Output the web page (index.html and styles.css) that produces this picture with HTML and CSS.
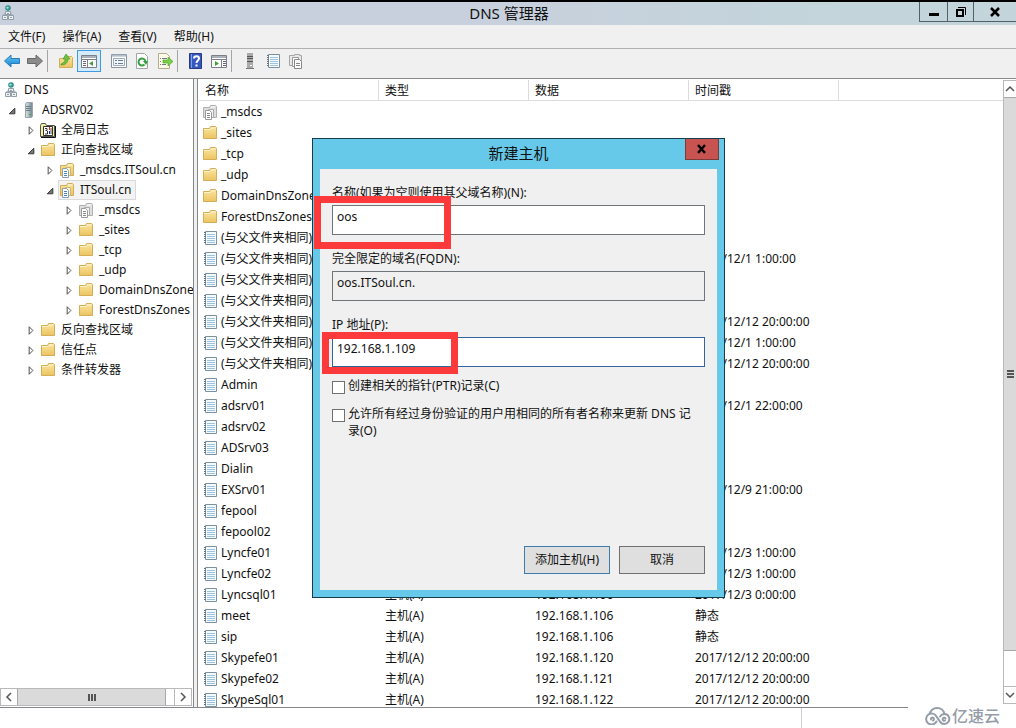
FILE: index.html
```html
<!DOCTYPE html>
<html lang="zh-CN">
<head>
<meta charset="utf-8">
<title>DNS 管理器</title>
<link rel="stylesheet" href="styles.css">
</head>
<body>
<svg class="sprite" aria-hidden="true">
  <defs>
    <linearGradient id="gold" x1="0" y1="0" x2="0" y2="1"><stop offset="0" stop-color="#fbe6a2"/><stop offset="1" stop-color="#ecc35f"/></linearGradient>
    <linearGradient id="steel" x1="0" y1="0" x2="1" y2="0"><stop offset="0" stop-color="#dfe7ea"/><stop offset="1" stop-color="#70838c"/></linearGradient>
    <linearGradient id="blue" x1="0" y1="0" x2="0" y2="1"><stop offset="0" stop-color="#6cc9f8"/><stop offset="1" stop-color="#1080cf"/></linearGradient>
  </defs>
  <symbol id="i-dns" viewBox="0 0 16 16">
    <circle cx="8" cy="3" r="2.800" fill="#2f928d"/><path d="M6 2.500l2-1 1 1.500-2 1z" fill="#a5e0d8"/><path d="M8 6v2M4 11V9h8v2" fill="none" stroke="#9aa5ae"/>
    <path d="M5.500 6.500h5v3h-5zM2.500 10.500h5v4h-5zM8.500 10.500h5v4h-5z" fill="#eef1f4" stroke="#919ca6"/><path d="M4 12.500h2M10 12.500h2M7 8.500h2" stroke="#919ca6"/>
  </symbol>
  <symbol id="i-server" viewBox="0 0 16 16">
    <path d="M4.500 1.500l1-1h6v14l-1 1h-6z" fill="url(#steel)" stroke="#9aa6ac"/><path d="M5 4.500h5M5 6.500h5M5 8.500h5" stroke="#6c7f88"/><path d="M8 12h2v1H8z" fill="#2fae4a"/>
  </symbol>
  <symbol id="i-server-gray" viewBox="0 0 16 16">
    <path d="M5 0h6v15H5z" fill="#aaa"/><path d="M5 3.500h6M5 5.500h6M5 8.500h6" stroke="#555"/><path d="M8 12h2v1H8z" fill="#fff"/><path d="M4 15.500h8" stroke="#777"/>
  </symbol>
  <symbol id="i-folder" viewBox="0 0 16 16">
    <path d="M1.500 3.500h6l1-2h5l1 1v11h-13z" fill="url(#gold)" stroke="#d3ad57"/><path d="M9 2.500h4v1H9z" fill="#fff7d8"/><path d="M2 4.500h6l1-1" stroke="#fff3c4" fill="none"/>
  </symbol>
  <symbol id="i-log" viewBox="0 0 16 16">
    <path d="M.5 3.500l1-2h4l1 2h8v11H.5z" fill="#f3ee9c" stroke="#555"/><path d="M15.500 4v11.500H1" fill="none" stroke="#111"/><path d="M3.500 4.500h9v9h-9z" fill="#fff" stroke="#333"/><path d="M5 6.500h2v2H5.500M7.500 9v3H5" fill="none" stroke="#333"/><path d="M9.500 5v3" stroke="#d22"/><path d="M9.500 9v3" stroke="#22c"/><path d="M11 6v6" stroke="#555"/>
  </symbol>
  <symbol id="i-zone" viewBox="0 0 16 16">
    <path d="M1.500 3.500h6l1-2h5l1 1v11h-13z" fill="url(#gold)" stroke="#d3ad57"/><path d="M9 2.500h4v1H9z" fill="#fff7d8"/>
    <path d="M6.500 5.500h5v8h-5z" fill="#fdf3d0" stroke="#c9b67a"/><path d="M3.500 6.500h4l2 2v7h-6z" fill="#fff" stroke="#8ba0b2"/><path d="M5 9.500h3M5 11.500h3M5 13.500h3" stroke="#4a84b8"/>
  </symbol>
  <symbol id="i-zone-gray" viewBox="0 0 16 16">
    <path d="M1.500 3.500h6l1-2h5l1 1v11h-13z" fill="#dedede" stroke="#b0b0b0"/><path d="M9 2.500h4v1H9z" fill="#fff"/>
    <path d="M6.500 5.500h5v8h-5z" fill="#f2f2f2" stroke="#aaa"/><path d="M3.500 6.500h4l2 2v7h-6z" fill="#fff" stroke="#999"/><path d="M5 9.500h3M5 11.500h3M5 13.500h3" stroke="#888"/>
  </symbol>
  <symbol id="i-record" viewBox="0 0 16 16">
    <path d="M3.500 1.500h11v13h-11z" fill="#f4fafd" stroke="#7d909e"/><path d="M5 4.500h8M5 6.500h8M5 8.500h8M5 10.500h8M5 12.500h8" stroke="#9cc4df"/><path d="M2 2.500h2M2 4.500h2M2 6.500h2M2 8.500h2M2 10.500h2M2 12.500h2" stroke="#66747f"/>
  </symbol>
  <symbol id="i-open" viewBox="0 0 16 16"><path d="M10.500 5.500v6h-6z" fill="#777" stroke="#333"/></symbol>
  <symbol id="i-closed" viewBox="0 0 16 16"><path d="M5.500 4v8l4-4z" fill="#fff" stroke="#444"/></symbol>
  <symbol id="i-left" viewBox="0 0 10 10"><path d="M7 1L3 5l4 4" fill="none" stroke="#555" stroke-width="1.500"/></symbol>
</svg>

<div class="window">
  <header class="titlebar">
    <svg class="icon"><use href="#i-dns"/></svg>
    <h1>DNS 管理器</h1>
    <div class="controls">
      <button class="ctl" aria-label="最小化"><svg viewBox="0 0 14 14"><path d="M2 8h10v3H2z"/></svg></button>
      <button class="ctl ctl-restore" aria-label="还原"><svg viewBox="0 0 14 14"><path d="M3 5h6v6H3z" fill="none" stroke="#000" stroke-width="2"/><path d="M4 2.500h7.500V10" fill="none" stroke="#000"/></svg></button>
      <button class="ctl ctl-close" aria-label="关闭"><svg viewBox="0 0 14 14"><path d="M3 3l8 8M11 3l-8 8" stroke="#000" stroke-width="2.500"/></svg></button>
    </div>
  </header>

  <nav class="menubar">
    <button>文件(F)</button><button>操作(A)</button><button>查看(V)</button><button>帮助(H)</button>
  </nav>

  <div class="toolbar">
    <button aria-label="后退"><svg viewBox="0 0 16 16"><path d="M.5 8L7 2v3.500h8.500v5H7V14z" fill="url(#blue)" stroke="#2b7cb8"/></svg></button>
    <button aria-label="前进"><svg viewBox="0 0 16 16"><path d="M15.500 8L9 2v3.500H.5v5H9V14z" fill="#8b8b8b" stroke="#686868"/></svg></button>
    <span class="sep"></span>
    <button aria-label="向上"><svg viewBox="0 0 16 16"><path d="M1.500 5.500h6l2-2h4l1 1v10h-13z" fill="url(#gold)" stroke="#d3ad57"/><path d="M3 11c3-1 4-3 4-5H5l3-5 4 5h-2c0 4-3 6-7 6z" fill="#6fc044" stroke="#3f9222" stroke-width=".6"/></svg></button>
    <button class="on" aria-label="控制台树"><svg viewBox="0 0 16 16"><path d="M.5 2.500h15v12H.5z" fill="#fff" stroke="#7a7f8a"/><path d="M1 3h14v2H1z" fill="#aab0bc"/><path d="M1 6.500h14M6.500 7v7" stroke="#7a7f8a"/><path d="M2 8.500h3M2 10.500h3M2 12.500h3" stroke="#667"/><path d="M12 8v5l-4-2.500z" fill="#42a23a"/></svg></button>
    <button class="gap" aria-label="属性"><svg viewBox="0 0 16 16"><path d="M.5 1.500h15v13H.5z" fill="#fff" stroke="#8795a3"/><path d="M1 2h14v1H1zM2.500 5.500h11v7h-11z" fill="#f4f7fa" stroke="#9eabb8"/><path d="M4 7.500h2M7 7.500h5M4 10.500h2M7 10.500h5" stroke="#667c92"/></svg></button>
    <button aria-label="刷新"><svg viewBox="0 0 16 16"><path d="M2.500.5h8l3 3v12h-11z" fill="#fff" stroke="#a1a6a8"/><path d="M10.500 11.500a3.500 3.500 0 1 1 1-3" fill="none" stroke="#38a044" stroke-width="2"/><path d="M9 8h5l-2 4z" fill="#38a044"/></svg></button>
    <button aria-label="导出列表"><svg viewBox="0 0 16 16"><path d="M1.500.5h8l3 3v12h-11z" fill="#fffbea" stroke="#b4aa8c"/><path d="M3 5.500h1M5 5.500h5M3 8.500h1M3 11.500h1M5 11.500h4" stroke="#777"/><path d="M6 7h5V4l5 4.500-5 4.500v-3H6z" fill="#7bcf45" stroke="#45a126" stroke-width=".6"/></svg></button>
    <span class="sep"></span>
    <button aria-label="帮助"><svg viewBox="0 0 16 16"><path d="M1.500.5h12v15h-12z" fill="#3558bd" stroke="#263b80"/><path d="M3.500 1v14" stroke="#7fa0e8"/><path d="M6 5.500c0-3 5-3 5 0 0 2-2.500 2-2.500 4.500M8.500 11.500v2" fill="none" stroke="#fff" stroke-width="2"/></svg></button>
    <button aria-label="操作窗格"><svg viewBox="0 0 16 16"><path d="M.5 2.500h15v12H.5z" fill="#fff" stroke="#7a7f8a"/><path d="M1 3h14v2H1z" fill="#aab0bc"/><path d="M1 6.500h14M10.500 7v7" stroke="#7a7f8a"/><path d="M12 8.500h3M12 10.500h3M12 12.500h3" stroke="#667"/><path d="M4 8v5l4-2.500z" fill="#42a23a"/></svg></button>
    <span class="sep"></span>
    <button aria-label="服务器"><svg><use href="#i-server-gray"/></svg></button>
    <button aria-label="记录"><svg><use href="#i-record"/></svg></button>
    <button aria-label="区域"><svg viewBox="0 0 16 16"><path d="M1.500 2.500h5v-1h5v1h2v10h-12z" fill="#e8e8e8" stroke="#a5a5a5"/><path d="M4.500 4.500h6v9h-6z" fill="#fff" stroke="#999"/><path d="M6.500 6.500h5l2 2v7h-7z" fill="#fff" stroke="#888"/><path d="M8 10.500h4M8 12.500h4" stroke="#888"/></svg></button>
  </div>

  <main class="panes">
    <section class="tree-pane">
      <ul class="tree">
        <li><div class="node"><span class="label"><svg class="icon"><use href="#i-dns"/></svg>DNS</span></div>
          <ul class="first">
            <li><div class="node"><svg class="tog"><use href="#i-open"/></svg><span class="label"><svg class="icon"><use href="#i-server"/></svg>ADSRV02</span></div>
              <ul>
                <li><div class="node"><svg class="tog"><use href="#i-closed"/></svg><span class="label"><svg class="icon"><use href="#i-log"/></svg>全局日志</span></div></li>
                <li><div class="node"><svg class="tog"><use href="#i-open"/></svg><span class="label"><svg class="icon"><use href="#i-folder"/></svg>正向查找区域</span></div>
                  <ul>
                    <li><div class="node"><svg class="tog"><use href="#i-closed"/></svg><span class="label"><svg class="icon"><use href="#i-zone"/></svg>_msdcs.ITSoul.cn</span></div></li>
                    <li><div class="node"><svg class="tog"><use href="#i-open"/></svg><span class="label selected"><svg class="icon"><use href="#i-zone"/></svg>ITSoul.cn</span></div>
                      <ul>
                        <li><div class="node"><svg class="tog"><use href="#i-closed"/></svg><span class="label"><svg class="icon"><use href="#i-zone-gray"/></svg>_msdcs</span></div></li>
                        <li><div class="node"><svg class="tog"><use href="#i-closed"/></svg><span class="label"><svg class="icon"><use href="#i-folder"/></svg>_sites</span></div></li>
                        <li><div class="node"><svg class="tog"><use href="#i-closed"/></svg><span class="label"><svg class="icon"><use href="#i-folder"/></svg>_tcp</span></div></li>
                        <li><div class="node"><svg class="tog"><use href="#i-closed"/></svg><span class="label"><svg class="icon"><use href="#i-folder"/></svg>_udp</span></div></li>
                        <li><div class="node"><svg class="tog"><use href="#i-closed"/></svg><span class="label"><svg class="icon"><use href="#i-folder"/></svg>DomainDnsZones</span></div></li>
                        <li><div class="node"><svg class="tog"><use href="#i-closed"/></svg><span class="label"><svg class="icon"><use href="#i-folder"/></svg>ForestDnsZones</span></div></li>
                      </ul>
                    </li>
                  </ul>
                </li>
                <li><div class="node"><svg class="tog"><use href="#i-closed"/></svg><span class="label"><svg class="icon"><use href="#i-folder"/></svg>反向查找区域</span></div></li>
                <li><div class="node"><svg class="tog"><use href="#i-closed"/></svg><span class="label"><svg class="icon"><use href="#i-folder"/></svg>信任点</span></div></li>
                <li><div class="node"><svg class="tog"><use href="#i-closed"/></svg><span class="label"><svg class="icon"><use href="#i-folder"/></svg>条件转发器</span></div></li>
              </ul>
            </li>
          </ul>
        </li>
      </ul>
      <div class="hscroll">
        <button aria-label="向左滚动"><svg><use href="#i-left"/></svg></button>
        <div class="track"><div class="thumb"><i class="grip"></i></div></div>
        <button aria-label="向右滚动"><svg class="turn-right"><use href="#i-left"/></svg></button>
      </div>
    </section>

    <section class="list-pane">
      <div class="list">
        <table>
          <colgroup><col class="c-name"><col class="c-type"><col class="c-data"><col class="c-time"><col></colgroup>
          <thead><tr><th>名称</th><th>类型</th><th>数据</th><th>时间戳</th><th></th></tr></thead>
          <tbody>
            <tr><td><svg class="icon"><use href="#i-zone-gray"/></svg>_msdcs</td><td></td><td></td><td></td><td></td></tr>
            <tr><td><svg class="icon"><use href="#i-folder"/></svg>_sites</td><td></td><td></td><td></td><td></td></tr>
            <tr><td><svg class="icon"><use href="#i-folder"/></svg>_tcp</td><td></td><td></td><td></td><td></td></tr>
            <tr><td><svg class="icon"><use href="#i-folder"/></svg>_udp</td><td></td><td></td><td></td><td></td></tr>
            <tr><td><svg class="icon"><use href="#i-folder"/></svg>DomainDnsZones</td><td></td><td></td><td></td><td></td></tr>
            <tr><td><svg class="icon"><use href="#i-folder"/></svg>ForestDnsZones</td><td></td><td></td><td></td><td></td></tr>
            <tr><td><svg class="icon"><use href="#i-record"/></svg>(与父文件夹相同)</td><td></td><td></td><td></td><td></td></tr>
            <tr><td><svg class="icon"><use href="#i-record"/></svg>(与父文件夹相同)</td><td></td><td></td><td>2017/12/1 1:00:00</td><td></td></tr>
            <tr><td><svg class="icon"><use href="#i-record"/></svg>(与父文件夹相同)</td><td></td><td></td><td></td><td></td></tr>
            <tr><td><svg class="icon"><use href="#i-record"/></svg>(与父文件夹相同)</td><td></td><td></td><td></td><td></td></tr>
            <tr><td><svg class="icon"><use href="#i-record"/></svg>(与父文件夹相同)</td><td></td><td></td><td>2017/12/12 20:00:00</td><td></td></tr>
            <tr><td><svg class="icon"><use href="#i-record"/></svg>(与父文件夹相同)</td><td></td><td></td><td>2017/12/1 1:00:00</td><td></td></tr>
            <tr><td><svg class="icon"><use href="#i-record"/></svg>(与父文件夹相同)</td><td></td><td></td><td>2017/12/12 20:00:00</td><td></td></tr>
            <tr><td><svg class="icon"><use href="#i-record"/></svg>Admin</td><td></td><td></td><td></td><td></td></tr>
            <tr><td><svg class="icon"><use href="#i-record"/></svg>adsrv01</td><td></td><td></td><td>2017/12/1 22:00:00</td><td></td></tr>
            <tr><td><svg class="icon"><use href="#i-record"/></svg>adsrv02</td><td></td><td></td><td></td><td></td></tr>
            <tr><td><svg class="icon"><use href="#i-record"/></svg>ADSrv03</td><td></td><td></td><td></td><td></td></tr>
            <tr><td><svg class="icon"><use href="#i-record"/></svg>Dialin</td><td></td><td></td><td></td><td></td></tr>
            <tr><td><svg class="icon"><use href="#i-record"/></svg>EXSrv01</td><td></td><td></td><td>2017/12/9 21:00:00</td><td></td></tr>
            <tr><td><svg class="icon"><use href="#i-record"/></svg>fepool</td><td></td><td></td><td></td><td></td></tr>
            <tr><td><svg class="icon"><use href="#i-record"/></svg>fepool02</td><td></td><td></td><td></td><td></td></tr>
            <tr><td><svg class="icon"><use href="#i-record"/></svg>Lyncfe01</td><td></td><td></td><td>2017/12/3 1:00:00</td><td></td></tr>
            <tr><td><svg class="icon"><use href="#i-record"/></svg>Lyncfe02</td><td></td><td></td><td>2017/12/3 1:00:00</td><td></td></tr>
            <tr><td><svg class="icon"><use href="#i-record"/></svg>Lyncsql01</td><td>主机(A)</td><td>192.168.1.106</td><td>2017/12/3 0:00:00</td><td></td></tr>
            <tr><td><svg class="icon"><use href="#i-record"/></svg>meet</td><td>主机(A)</td><td>192.168.1.106</td><td>静态</td><td></td></tr>
            <tr><td><svg class="icon"><use href="#i-record"/></svg>sip</td><td>主机(A)</td><td>192.168.1.106</td><td>静态</td><td></td></tr>
            <tr><td><svg class="icon"><use href="#i-record"/></svg>Skypefe01</td><td>主机(A)</td><td>192.168.1.120</td><td>2017/12/12 20:00:00</td><td></td></tr>
            <tr><td><svg class="icon"><use href="#i-record"/></svg>Skypefe02</td><td>主机(A)</td><td>192.168.1.121</td><td>2017/12/12 20:00:00</td><td></td></tr>
            <tr><td><svg class="icon"><use href="#i-record"/></svg>SkypeSql01</td><td>主机(A)</td><td>192.168.1.122</td><td>2017/12/12 20:00:00</td><td></td></tr>
          </tbody>
        </table>
      </div>
      <div class="vscroll">
        <button aria-label="向上滚动"><svg class="turn-up"><use href="#i-left"/></svg></button>
        <div class="track"><div class="thumb"><i class="grip"></i></div></div>
        <button aria-label="向下滚动"><svg class="turn-down"><use href="#i-left"/></svg></button>
      </div>
    </section>
  </main>

  <footer class="statusbar">
    <div class="status-main"></div><div class="status-side"></div>
    <div class="brand">
      <svg viewBox="0 0 26 18"><g fill="none" stroke="#949ca7" stroke-width="2" stroke-linecap="round"><path d="M4.500 7C5 3.500 8.500 1 12 1c4 0 7 2.500 7.500 6a5 5 0 1 1-4.500 7.500L11.500 9.500A5.500 5.500 0 1 0 11.500 14.500"/><path d="M6 12.500a1.500 1.500 0 1 1 2 1M15 9.500c1.500-2 3-2.500 4.500-2.500M20 13.500a1.500 1.500 0 1 1 .5-2"/></g></svg>
      <span>亿速云</span>
    </div>
  </footer>
</div>

<form class="dialog" role="dialog" aria-labelledby="dlg-title">
  <header class="dialog-title">
    <h2 id="dlg-title">新建主机</h2>
    <button type="button" class="dialog-close" aria-label="关闭"><svg viewBox="0 0 14 14"><path d="M3 3l7 8M10 3l-7 8" stroke="#000" stroke-width="2.500"/></svg></button>
  </header>
  <div class="dialog-body">
    <div class="field"><label for="host">名称(如果为空则使用其父域名称)(N):</label><input id="host" type="text" value="oos"></div>
    <div class="field"><label for="fqdn">完全限定的域名(FQDN):</label><input id="fqdn" type="text" value="oos.ITSoul.cn." readonly></div>
    <div class="field"><label for="ip">IP 地址(P):</label><input id="ip" class="active" type="text" value="192.168.1.109"></div>
    <div class="check"><input id="ptr" type="checkbox"><label for="ptr">创建相关的指针(PTR)记录(C)</label></div>
    <div class="check"><input id="upd" type="checkbox"><label for="upd">允许所有经过身份验证的用户用相同的所有者名称来更新 DNS 记录(O)</label></div>
    <div class="actions"><button type="button" class="default">添加主机(H)</button><button type="button">取消</button></div>
  </div>
  <div class="mark mark-host"></div>
  <div class="mark mark-ip"></div>
</form>
</body>
</html>
```
FILE: styles.css
```css
* { box-sizing: border-box; }
body {
  margin: 0;
  overflow: hidden;
  background: #fff;
  color: #111;
  font: 12px/16px "Noto Sans", "Noto Sans CJK SC", sans-serif;
}
button, input { font: inherit; color: inherit; margin: 0; }
button { padding: 0; border: 0; background: none; }
h1, h2 { margin: 0; font-weight: 400; font-size: 15px; line-height: 20px; }
ul { margin: 0; padding: 0; list-style: none; }
svg { display: block; flex: none; }
.sprite { position: absolute; width: 0; height: 0; }
.icon { width: 16px; height: 16px; }

.window { display: flex; flex-direction: column; height: 100vh; background: #f0f0f0; }

.titlebar {
  display: grid;
  grid-template-columns: 1fr auto 1fr;
  flex: none;
  height: 25px;
  border-top: 2px solid #000;
  background: linear-gradient(90deg, #c8d0dd 45%, #c3d5db 85%);
}
.titlebar .icon { margin-top: 3px; }
.titlebar h1 { padding-left: 2px; line-height: 23px; }
.controls { display: flex; justify-content: flex-end; align-items: flex-start; }
.ctl {
  display: grid;
  place-items: center;
  width: 28px;
  height: 20px;
  border: solid #526068;
  border-width: 0 0 1px 1px;
}
.ctl svg { width: 14px; height: 14px; }
.ctl-restore { width: 26px; }
.ctl-close { width: 43px; }

.menubar {
  display: flex;
  flex: none;
  gap: 17px;
  height: 24px;
  padding: 0 8px;
  border-bottom: 1px solid #b0b0b0;
}

.toolbar {
  display: flex;
  flex: none;
  align-items: center;
  height: 30px;
  padding-bottom: 6px;
  border-bottom: 1px solid #8a8a8a;
}
.toolbar button { display: grid; place-items: center; width: 23px; height: 22px; }
.toolbar svg { width: 16px; height: 16px; }
.toolbar .on { width: 24px; border: 1px solid #3c9be4; background: #d5eafb; }
.toolbar .gap { margin-left: 6px; }
.sep { width: 1px; height: 22px; margin: 0 6px 0 1px; background: #a5a5a5; }

.panes { display: flex; flex: 1; min-height: 0; gap: 3px; border-bottom: 1px solid #84878c; }
.tree-pane {
  display: flex;
  flex: none;
  flex-direction: column;
  width: 194px;
  padding-top: 1px;
  border-right: 1px solid #84878c;
  background: #fff;
}
.tree { flex: 1; overflow: hidden; }
.tree ul { padding-left: 19px; }
.tree .first { padding-left: 5px; }
.node { display: flex; align-items: center; height: 20px; }
.tog { width: 15px; height: 15px; }
.label {
  display: flex;
  align-items: center;
  gap: 5px;
  height: 20px;
  padding: 0 3px 0 0;
  border: 1px solid transparent;
  white-space: nowrap;
}
.tree > li > .node { padding-left: 2px; }
.selected { border-color: #dadada; background: #f3f3f3; }

.hscroll, .vscroll { display: flex; background: #fff; }
.hscroll { height: 18px; margin: 0 1px 1px 0; border: 1px solid #b9b9b9; }
.hscroll button, .vscroll button { display: grid; place-items: center; flex: none; }
.hscroll button { width: 16px; }
.hscroll svg, .vscroll svg { width: 10px; height: 10px; }
.turn-right { transform: rotate(180deg); }
.turn-up { transform: rotate(90deg); }
.turn-down { transform: rotate(270deg); }
.track { flex: 1; }
.thumb { display: grid; place-items: center; background: #dadada; }
.hscroll .track { border-right: 1px solid #b9b9b9; }
.hscroll .thumb { width: 95%; height: 100%; border: solid #a8a8a8; border-width: 0 1px; }
.hscroll .grip { width: 8px; height: 7px; background: repeating-linear-gradient(90deg, #555 0 2px, transparent 2px 3px); }

.list-pane { display: flex; flex: 1; min-width: 0; border-left: 1px solid #84878c; background: #fff; }
.list { flex: 1; min-width: 0; padding: 1px 0 0 1px; overflow: hidden; }
table { width: 100%; table-layout: fixed; border-collapse: separate; border-spacing: 0; }
.c-name { width: 180px; }
.c-type { width: 150px; }
.c-data { width: 160px; }
.c-time { width: 150px; }
th {
  height: 21px;
  padding: 2px 6px 0;
  border: solid #dcdcdc;
  border-width: 0 1px 1px 0;
  font-weight: 400;
  text-align: left;
}
th:last-child { border-right: 0; }
td { height: 21px; padding: 0 6px; white-space: nowrap; }
td:first-child { padding: 0 0 0 3px; }
td .icon { display: inline-block; margin-right: 3px; vertical-align: -4px; }

.vscroll { flex-direction: column; flex: none; width: 13px; margin: 1px 0 3px; border: 1px solid #b9b9b9; border-right: 0; }
.vscroll button { height: 16px; overflow: hidden; }
.vscroll .track { border-bottom: 1px solid #b9b9b9; }
.vscroll .thumb { height: 94%; border: solid #a8a8a8; border-width: 1px 0; }
.vscroll .grip { width: 7px; height: 8px; background: repeating-linear-gradient(180deg, #555 0 2px, transparent 2px 3px); }

.statusbar { display: flex; flex: none; height: 20px; background: #fff; }
.status-main { flex: 1; border-right: 1px solid #d0d0d0; }
.status-side { width: 106px; }
.brand {
  display: flex;
  align-items: center;
  gap: 1px;
  width: 108px;
  height: 24px;
  margin-top: -4px;
  padding-left: 17px;
  background: #fff;
  color: #949ca7;
  font-size: 16px;
  font-weight: 500;
}
.brand svg { width: 26px; height: 18px; }

.dialog {
  position: absolute;
  left: 312px;
  top: 138px;
  display: flex;
  flex-direction: column;
  width: 413px;
  height: 460px;
  padding: 0 7px 7px;
  border: 1px solid #173c4c;
  background: #66c9e9;
}
.dialog-title { display: grid; grid-template-columns: 34px 1fr 34px; flex: none; height: 30px; }
.dialog-title h2 { grid-column: 2; line-height: 28px; text-align: center; }
.dialog-close { display: grid; place-items: center; height: 21px; margin: 0 -2px 0 2px; border: 1px solid #7d3b38; border-top: 0; background: #c75450; }
.dialog-close svg { width: 14px; height: 14px; }
.dialog-body { display: flex; flex: 1; flex-direction: column; padding: 16px 12px; background: #f0f0f0; }
.field { display: flex; flex-direction: column; gap: 4px; margin-bottom: 16px; }
.field input { height: 30px; padding: 0 4px 7px; border: 1px solid #70757a; border-radius: 0; outline: 0; background: #fff; }
.field input[readonly] { background: #f0f0f0; }
.field input.active { border-color: #34649b; }
.check { display: flex; align-items: flex-start; gap: 3px; margin-bottom: 11px; padding-right: 8px; line-height: 17px; }
.field + .check { margin-top: -6px; }
.check input { appearance: none; flex: none; width: 13px; height: 13px; margin-top: 4px; border: 1px solid #707070; background: #fff; }
.actions { display: flex; justify-content: flex-end; gap: 9px; margin-top: auto; }
.actions button { width: 86px; height: 28px; border: 1px solid #707070; background: #dfdfdf; }
.actions .default { border-color: #3f7cae; }

.mark { position: absolute; border: 7px solid #fc3a3c; pointer-events: none; }
.mark-host { left: 1px; top: 57px; width: 137px; height: 53px; }
.mark-ip { left: 9px; top: 193px; width: 136px; height: 42px; }
```
